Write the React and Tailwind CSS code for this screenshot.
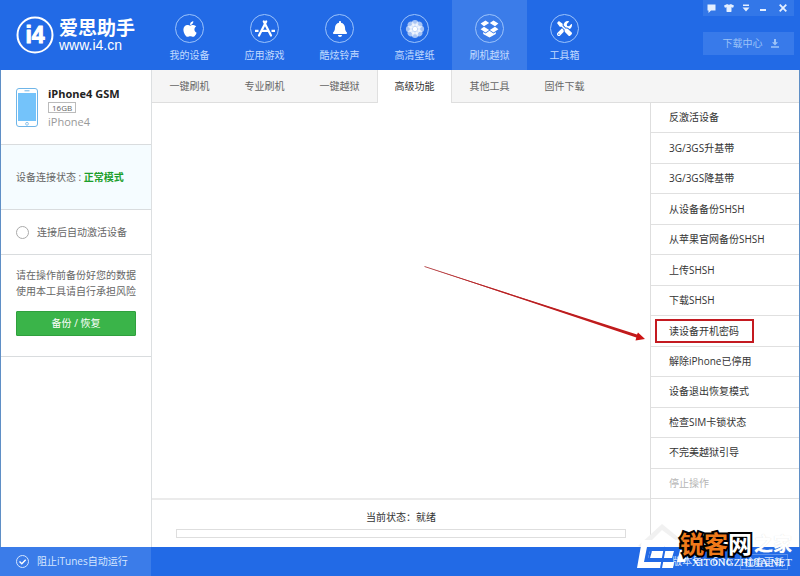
import React, { useState } from "react";
import { FaApple, FaBell, FaTools, FaTshirt } from "react-icons/fa";

function AppsIcon() {
  return (
    <svg width="22" height="18" viewBox="0 0 22 18" fill="none" stroke="#fff" strokeLinecap="round">
      <path d="M12.2 1.5 5 15.5M9.8 1.5 17 15.5" strokeWidth="2.2" />
      <path d="M1 10.8h3.5M7 10.8h7.5M17.5 10.8H21" strokeWidth="2.2" strokeLinecap="butt" />
    </svg>
  );
}

function FlowerIcon() {
  const petals = [0, 45, 90, 135, 180, 225, 270, 315];
  return (
    <svg width="20" height="20" viewBox="0 0 20 20" fill="#fff">
      {petals.map((angle) => (
        <circle key={angle} cx="10" cy="4.2" r="3.3" opacity="0.6" transform={`rotate(${angle} 10 10)`} />
      ))}
      <circle cx="10" cy="10" r="5.4" opacity="0.6" />
      <circle cx="10" cy="10" r="2.2" />
    </svg>
  );
}

function BoxIcon() {
  return (
    <svg width="19" height="18" viewBox="0 0 19 18" fill="#fff">
      <path d="M5.5 0.5 9.2 3 4 6.2 0.6 3.6zM13.5 0.5 9.8 3 15 6.2 18.4 3.6z" />
      <path d="M4 6.8 9.2 10 5.5 12.4 0.6 9.3zM15 6.8 9.8 10 13.5 12.4 18.4 9.3z" />
      <path d="M3.2 12 5.5 13.4 9.5 10.8 13.5 13.4 15.8 12V14L9.5 17.6 3.2 14z" />
    </svg>
  );
}

const navItems = [
  { label: "我的设备", icon: <FaApple size={18} /> },
  { label: "应用游戏", icon: <AppsIcon /> },
  { label: "酷炫铃声", icon: <FaBell size={16} /> },
  { label: "高清壁纸", icon: <FlowerIcon /> },
  { label: "刷机越狱", icon: <BoxIcon /> },
  { label: "工具箱", icon: <FaTools size={15} /> },
];

const tabs = ["一键刷机", "专业刷机", "一键越狱", "高级功能", "其他工具", "固件下载"];

const actions = [
  "反激活设备",
  "3G/3GS升基带",
  "3G/3GS降基带",
  "从设备备份SHSH",
  "从苹果官网备份SHSH",
  "上传SHSH",
  "下载SHSH",
  "读设备开机密码",
  "解除iPhone已停用",
  "设备退出恢复模式",
  "检查SIM卡锁状态",
  "不完美越狱引导",
  "停止操作",
];

function Logo() {
  return (
    <div className="flex w-[152px] shrink-0 items-center gap-[5px] pl-4 text-white">
      <svg width="38" height="38" viewBox="0 0 38 38">
        <circle cx="19" cy="19" r="17.5" fill="none" stroke="#fff" strokeWidth="2" />
        <text
          x="19"
          y="27"
          textAnchor="middle"
          fontFamily="Liberation Sans, sans-serif"
          fontWeight="700"
          fontSize="23"
          fill="#fff"
          stroke="#fff"
          strokeWidth="1"
          strokeLinejoin="round"
        >
          i4
        </text>
      </svg>
      <div>
        <div className="text-[19px] leading-[19px] font-bold whitespace-nowrap">爱思助手</div>
        <div className="font-['Liberation_Sans',sans-serif] text-[14px] leading-[14px]">www.i4.cn</div>
      </div>
    </div>
  );
}

function WindowButtons() {
  return (
    <div className="flex h-4 w-[91px] items-center bg-[#3377e8] text-[#e4efff]">
      <button type="button" aria-label="反馈" className="flex flex-1 justify-center">
        <svg width="9" height="9" viewBox="0 0 9 9" fill="currentColor">
          <path d="M0.5 0.5h8v6H4L1.5 9V6.5h-1z" />
        </svg>
      </button>
      <button type="button" aria-label="皮肤" className="flex flex-1 justify-center">
        <FaTshirt size={10} />
      </button>
      <button type="button" aria-label="菜单" className="flex flex-1 justify-center">
        <svg width="8" height="8" viewBox="0 0 8 8" fill="currentColor">
          <path d="M1 0.5h6v1.5H1zM0.5 3.5h7L4 7.5z" />
        </svg>
      </button>
      <button type="button" aria-label="最小化" className="flex flex-1 justify-center">
        <svg width="8" height="8" viewBox="0 0 8 8" fill="currentColor">
          <path d="M1 5h6v2H1z" />
        </svg>
      </button>
      <button type="button" aria-label="关闭" className="flex w-[23px] justify-center">
        <svg width="8" height="8" viewBox="0 0 8 8" stroke="currentColor" strokeWidth="1.8">
          <path d="M0.7 0.7l6.6 6.6M7.3 0.7L0.7 7.3" />
        </svg>
      </button>
    </div>
  );
}

function Header() {
  const [active, setActive] = useState(4);

  return (
    <header className="flex h-[70px] bg-[#226ae6]">
      <Logo />
      <nav className="flex">
        {navItems.map((item, index) => (
          <button
            key={item.label}
            type="button"
            onClick={() => setActive(index)}
            className={`flex w-[75px] flex-col items-center gap-1 pt-[14px] text-[#c3dbff] ${
              index === active ? "bg-[#3b7ce9]" : ""
            }`}
          >
            <span className="flex size-[29px] items-center justify-center rounded-full border border-[#9cc3fb] text-white">
              {item.icon}
            </span>
            <span className="leading-4">{item.label}</span>
          </button>
        ))}
      </nav>
      <div className="ml-auto flex flex-col gap-4 pr-[6px]">
        <WindowButtons />
        <button
          type="button"
          className="flex h-[23px] w-[91px] items-center justify-center gap-2 bg-[#387aea] pl-1 text-[#9cc3f8]"
        >
          下载中心
          <svg width="8" height="9" viewBox="0 0 8 9" fill="currentColor">
            <path d="M3 0h2v3.2h2L4 6.4 1 3.2h2zM0 7.3h8v1.5H0z" />
          </svg>
        </button>
      </div>
    </header>
  );
}

function PhoneIcon() {
  return (
    <svg width="22" height="39" viewBox="0 0 22 39" fill="none">
      <rect x="0.5" y="0.5" width="21" height="38" rx="2.5" fill="#fff" stroke="#6fb5e8" />
      <rect x="2" y="5" width="18" height="28" fill="#74c3fa" />
      <path d="M8.5 2.8h5" stroke="#6fb5e8" />
      <circle cx="11" cy="35.8" r="1.4" stroke="#6fb5e8" strokeWidth="0.8" />
    </svg>
  );
}

function Sidebar() {
  return (
    <aside className="w-[152px] shrink-0 border-r border-l border-r-[#dcdfe1] border-l-[#5f8fc6] text-[#666]">
      <div className="flex h-[75px] gap-[10px] border-b border-[#d9dcde] pt-[18px] pl-[15px]">
        <PhoneIcon />
        <div className="flex flex-col items-start">
          <div className="text-[11px] leading-3 font-bold text-[#222]">iPhone4 GSM</div>
          <div className="mt-[2px] border border-[#bbb] px-[3px] text-[8px] leading-[9px]">16GB</div>
          <div className="mt-[2px] text-[11px] leading-[13px] text-[#999]">iPhone4</div>
        </div>
      </div>
      <div className="flex h-[65px] items-center border-b border-[#d9dcde] bg-[#f5fcff] pl-[15px]">
        设备连接状态 :&nbsp;<b className="text-[#1c9f2c]">正常模式</b>
      </div>
      <label className="flex h-[45px] items-center gap-2 border-b border-[#d9dcde] pl-[15px]">
        <input type="checkbox" className="size-[13px] appearance-none rounded-full border border-[#aaa] bg-white" />
        连接后自动激活设备
      </label>
      <div className="border-b border-[#d9dcde] px-[15px] pt-3 pb-5">
        <p className="leading-4 whitespace-nowrap">
          请在操作前备份好您的数据
          <br />
          使用本工具请自行承担风险
        </p>
        <button
          type="button"
          className="mt-3 block h-[25px] w-full rounded-[1px] border border-[#2fa03d] bg-[#3ab449] text-white"
        >
          备份 / 恢复
        </button>
      </div>
    </aside>
  );
}

function Arrow() {
  return (
    <svg className="absolute top-[163px] right-[5px]" width="221" height="76" viewBox="0 0 221 76">
      <path d="M0.5 0.5 213 68.5 214 66.5 221 73 211.5 74.5 212.3 71.5z" fill="#cc1414" />
      <path d="M0.5 0.5 213 70" stroke="#a8282c" strokeWidth="0.8" />
    </svg>
  );
}

function Main() {
  const [tab, setTab] = useState("高级功能");

  return (
    <main className="flex min-w-0 flex-1 flex-col border-r border-r-[#5f8fc6]">
      <div className="flex h-[33px] border-b border-[#dedede] bg-[#f5f5f5]">
        {tabs.map((name) => (
          <button
            key={name}
            type="button"
            onClick={() => setTab(name)}
            className={`w-[75px] ${
              name === tab ? "-mb-px border-r border-l border-[#e0e0e0] bg-white text-[#333]" : "text-[#666]"
            }`}
          >
            {name}
          </button>
        ))}
      </div>
      <div className="flex flex-1">
        <section className="flex min-w-0 flex-1 flex-col">
          <div className="relative flex-1">
            <Arrow />
          </div>
          <div className="flex h-[49px] flex-col items-center gap-1 border-t-2 border-[#ebebeb] px-6 pt-[9px] text-[#333]">
            <div className="leading-4">当前状态：就绪</div>
            <div role="progressbar" aria-label="当前状态" className="h-[9px] w-full border border-[#dedede]" />
          </div>
        </section>
        <aside className="flex w-[149px] flex-col border-l border-[#dedede]">
          <ul className="flex flex-1 flex-col">
            {actions.map((action) => (
              <li key={action} className="relative flex min-h-6 flex-1 border-b border-[#e0e0e0]">
                <button
                  type="button"
                  disabled={action === "停止操作"}
                  className="w-full pl-[18px] text-left text-[#333] disabled:text-[#b5b5b5]"
                >
                  {action}
                </button>
                {action === "读设备开机密码" && (
                  <span className="pointer-events-none absolute inset-y-[3px] left-1 w-[99px] border-2 border-[#c41a20]" />
                )}
              </li>
            ))}
          </ul>
          <div className="h-12" />
        </aside>
      </div>
    </main>
  );
}

function Footer() {
  return (
    <footer className="flex h-[29px] items-center justify-between bg-[#226ae6] text-[#d5e6ff]">
      <label className="flex h-full w-[151px] items-center gap-2 bg-[#3b7ce9] pl-4">
        <span className="relative flex">
          <input type="checkbox" defaultChecked className="size-[13px] appearance-none rounded-full border border-[#d5e6ff]" />
          <svg className="pointer-events-none absolute inset-0" width="13" height="13" viewBox="0 0 13 13">
            <path d="M3.5 6.5 5.8 8.8 9.7 4.8" fill="none" stroke="#fff" strokeWidth="1.4" />
          </svg>
        </span>
        阻止iTunes自动运行
      </label>
      <div className="flex items-center gap-2 pr-3">
        <span>版本号：6.16</span>
        <button type="button" className="h-4 border border-[#5b91ee] px-[3px] leading-3">
          检查更新
        </button>
      </div>
    </footer>
  );
}

// site marks stamped over the lower right corner
function Watermark() {
  return (
    <div className="pointer-events-none absolute right-0 bottom-0 h-[56px] w-[166px]">
      <svg className="absolute inset-0" width="166" height="56" viewBox="0 0 166 56">
        <path d="M4 26 28 4 50 22 44 22 28 10 10 28z" fill="#f1f1f1" />
        <path d="M8 20h37l-2 7H13l-3 15h30l-1 6H3z" fill="#fff" />
        <path d="M16 31h24l-2 7H14zM46 30h8l-3 12h-8z" fill="#fff" />
        <path d="M17 31 15 38M31 27 27 48" stroke="#226ae6" strokeWidth="2" />
      </svg>
      <span className="absolute top-[12px] right-[8px] text-[19px] leading-6 font-bold text-white [text-shadow:0_0_1px_#ddd]">
        之家
      </span>
      <span className="absolute right-[8px] bottom-[8px] font-['Liberation_Serif',serif] text-[11px] leading-3 text-white">
        XITONGZHIJIA.NET
      </span>
      <span className="absolute top-[10px] left-[46px] text-[24px] leading-7 font-bold whitespace-nowrap text-[#ef7a1a] [-webkit-text-stroke:4px_#000] [paint-order:stroke_fill]">
        锐客<span className="text-white">网</span>
      </span>
    </div>
  );
}

function App() {
  return (
    <div className="relative flex min-h-screen flex-col bg-white font-['Open_Sans','Noto_Sans_CJK_SC',sans-serif] text-[10px]">
      <Header />
      <div className="flex flex-1">
        <Sidebar />
        <Main />
      </div>
      <Footer />
      <Watermark />
    </div>
  );
}

export default App;
